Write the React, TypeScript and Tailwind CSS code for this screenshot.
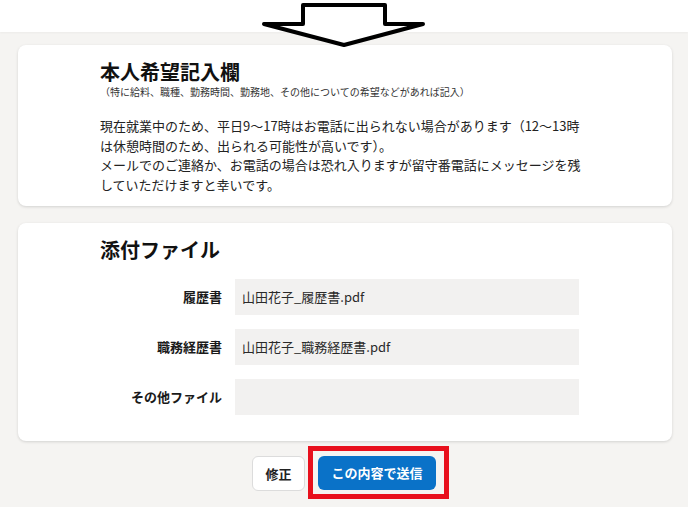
import React from 'react';

const font = { fontFamily: '"Noto Sans CJK JP", "Noto Sans", sans-serif' };

const files = [
  { label: '履歴書', name: '山田花子_履歴書.pdf' },
  { label: '職務経歴書', name: '山田花子_職務経歴書.pdf' },
  { label: 'その他ファイル', name: '' },
];

const DownArrow: React.FC = () => (
  <svg className="absolute left-[258px] top-0" width="172" height="52" viewBox="258 0 172 52">
    <polygon
      points="303,5 385,5 385,24 423,24 344,45 264,24 303,24"
      fill="#fff"
      stroke="#000"
      strokeWidth="4"
      strokeLinejoin="round"
    />
  </svg>
);

const App: React.FC = () => {
  return (
    <div className="relative w-[688px] h-[507px] overflow-hidden bg-[#f5f4f2] text-[#1a1a1a]" style={font}>
      {/* header band */}
      <div className="h-[32px] bg-white shadow-[0_1px_2px_rgba(0,0,0,0.04)]" />

      <div className="ml-[18px] w-[654px] pt-[13px]">
        {/* 本人希望記入欄 */}
        <section className="bg-white rounded-lg shadow-[0_1px_3px_rgba(0,0,0,0.14)] pl-[82px] pt-[13px] pb-[12px]">
          <h2 className="text-[20px] leading-[28px] font-bold text-[#111]">本人希望記入欄</h2>
          <p className="text-[10px] leading-[12px] text-[#333]">（特に給料、職種、勤務時間、勤務地、その他についての希望などがあれば記入）</p>
          <p className="mt-[18px] w-[492px] text-[13px] leading-[19.5px] text-[#222]">
            現在就業中のため、平日9〜17時はお電話に出られない場合があります（12〜13時は休憩時間のため、出られる可能性が高いです）。
            <br />
            メールでのご連絡か、お電話の場合は恐れ入りますが留守番電話にメッセージを残していただけますと幸いです。
          </p>
        </section>

        {/* 添付ファイル */}
        <section className="mt-[17px] bg-white rounded-lg shadow-[0_1px_3px_rgba(0,0,0,0.14)] pl-[82px] pt-[13px] pb-[26px]">
          <h2 className="text-[20px] leading-[28px] font-bold text-[#111]">添付ファイル</h2>
          <div className="mt-[15px] flex flex-col gap-[14px]">
            {files.map((f) => (
              <div key={f.label} className="flex items-center gap-[13px]">
                <span className="w-[122px] text-right text-[13px] font-bold text-[#1a1a1a]">{f.label}</span>
                <div className="w-[344px] h-[36px] bg-[#f2f1f0] flex items-center px-[7px] text-[13px] text-[#2a2a2a]">
                  {f.name}
                </div>
              </div>
            ))}
          </div>
        </section>
      </div>

      {/* actions */}
      <div className="mt-[15px] flex justify-center gap-[13px]">
        <button className="w-[53px] h-[35px] rounded-md border border-[#dcdcdc] bg-white text-[13px] font-bold text-[#222]">
          修正
        </button>
        <div className="relative">
          <button className="w-[118px] h-[34px] rounded-md bg-[#0a72c8] text-[13px] font-bold text-white">
            この内容で送信
          </button>
          <div className="absolute -left-[10px] -top-[10px] -right-[13px] -bottom-[8px] border-[5px] border-[#e8101d] pointer-events-none" />
        </div>
      </div>

      <DownArrow />
    </div>
  );
};

export default App;
